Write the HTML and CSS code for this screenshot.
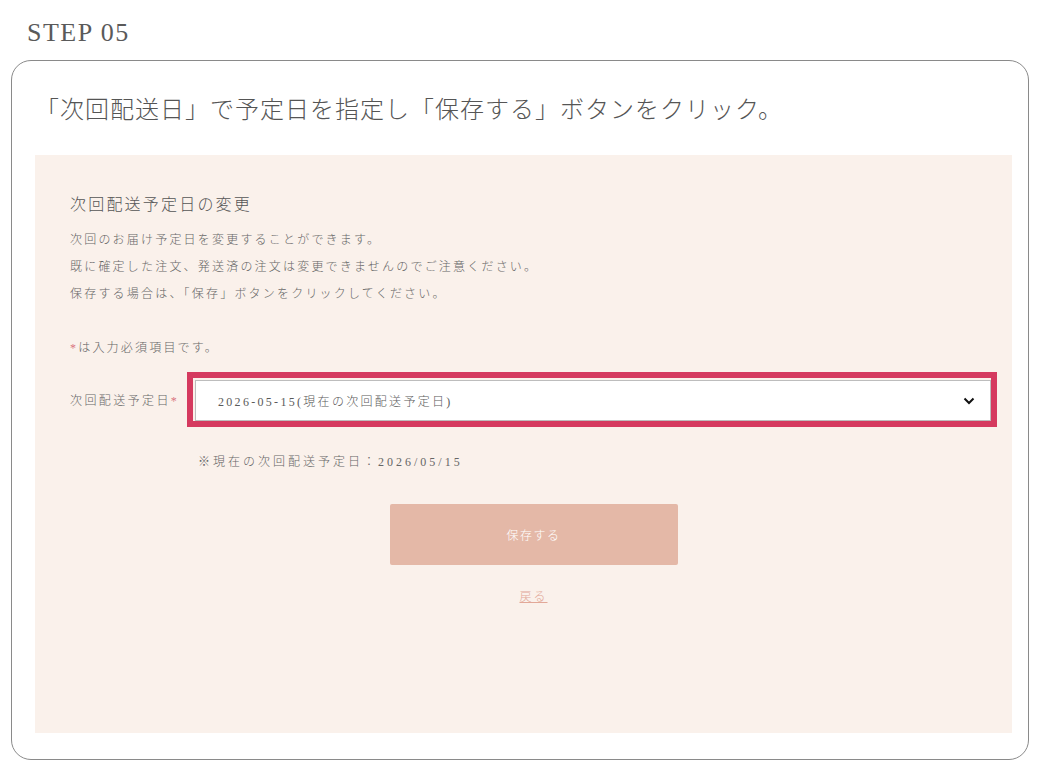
FILE: index.html
```html
<!DOCTYPE html>
<html lang="ja">
<head>
    <meta charset="UTF-8">
    <meta name="viewport" content="width=device-width, initial-scale=1.0">
    <title>STEP 05</title>
    <link rel="stylesheet" href="styles.css">
</head>
<body>
    <div class="step">STEP 05</div>

    <div class="card">
        <h1 class="card-title">「次回配送日」で予定日を指定し「保存する」ボタンをクリック。</h1>

        <!-- Screen capture -->
        <div class="panel">
            <h2>次回配送予定日の変更</h2>
            <p class="lead">
                次回のお届け予定日を変更することができます。<br>
                既に確定した注文、発送済の注文は変更できませんのでご注意ください。<br>
                保存する場合は、「保存」ボタンをクリックしてください。
            </p>
            <p class="required-note"><span class="req">*</span>は入力必須項目です。</p>

            <div class="form-row">
                <label>次回配送予定日<span class="req">*</span></label>
                <div class="highlight">
                    <div class="select">
                        <span>2026-05-15(現在の次回配送予定日)</span>
                        <svg width="12" height="8" viewBox="0 0 12 8">
                            <path d="M1.5 1.5 L6 6 L10.5 1.5" fill="none" stroke="#111" stroke-width="2"/>
                        </svg>
                    </div>
                </div>
            </div>
            <p class="current">※現在の次回配送予定日：2026/05/15</p>

            <div class="actions">
                <button type="button">保存する</button>
                <a href="#" class="back">戻る</a>
            </div>
        </div>
    </div>
</body>
</html>
```

FILE: styles.css
```css
/* General */
body {
    font-family: "Liberation Serif", "Noto Sans CJK JP", serif;
    margin: 0;
    padding: 18px 11px 0;
    background: #fff;
    color: #555;
}

.step {
    font-size: 26px;
    line-height: 30px;
    letter-spacing: 1.5px;
    margin-left: 16px;
    margin-bottom: 12px;
    color: #5a5a5a;
}

/* Card */
.card {
    border: 1px solid #8a8a8a;
    border-radius: 20px;
    padding: 31px 16px 26px 23px;
}

.card-title {
    font-size: 24px;
    font-weight: 300;
    line-height: 36px;
    letter-spacing: 1px;
    margin: 0 0 27px;
    color: #555;
}

/* Panel (screen capture) */
.panel {
    background-color: #faf1eb;
    height: 578px;
    box-sizing: border-box;
    padding: 38px 15px 0 35px;
    color: #666;
}

.panel h2 {
    font-size: 16px;
    font-weight: 300;
    line-height: 24px;
    letter-spacing: 2.2px;
    margin: 0 0 10px;
    color: #555;
}

.lead, .required-note, .current {
    font-size: 12px;
    line-height: 27px;
    letter-spacing: 2.2px;
    font-weight: 300;
    margin: 0;
}

.required-note {
    margin-top: 27px;
}

.req {
    color: #d9737f;
}

.form-row {
    display: flex;
    align-items: center;
    margin-top: 10px;
}

.form-row label {
    width: 117px;
    flex-shrink: 0;
    font-size: 12px;
    letter-spacing: 2.4px;
    font-weight: 300;
}

.highlight {
    flex: 1;
    border: 6px solid #d53a5f;
    padding: 2px 0 0 2px;
}

.select {
    height: 39px;
    background: #fff;
    border: 1px solid #bdbdbd;
    display: flex;
    align-items: center;
    justify-content: space-between;
    padding: 0 15px 0 22px;
    font-size: 12px;
    font-weight: 300;
    letter-spacing: 2.3px;
    color: #5a5a5a;
}

.current {
    margin: 22px 0 0 128px;
    letter-spacing: 3px;
}

/* Actions */
.actions {
    display: flex;
    flex-direction: column;
    align-items: center;
    margin-top: 28px;
}

button {
    width: 288px;
    height: 61px;
    background-color: #e4b8a7;
    color: #fff;
    border: none;
    border-radius: 2px;
    font-family: inherit;
    font-size: 12px;
    font-weight: 300;
    letter-spacing: 1.5px;
    cursor: pointer;
}

.back {
    margin-top: 22px;
    font-size: 12px;
    font-weight: 300;
    letter-spacing: 2px;
    color: #e2a898;
    text-decoration: underline;
}
```
